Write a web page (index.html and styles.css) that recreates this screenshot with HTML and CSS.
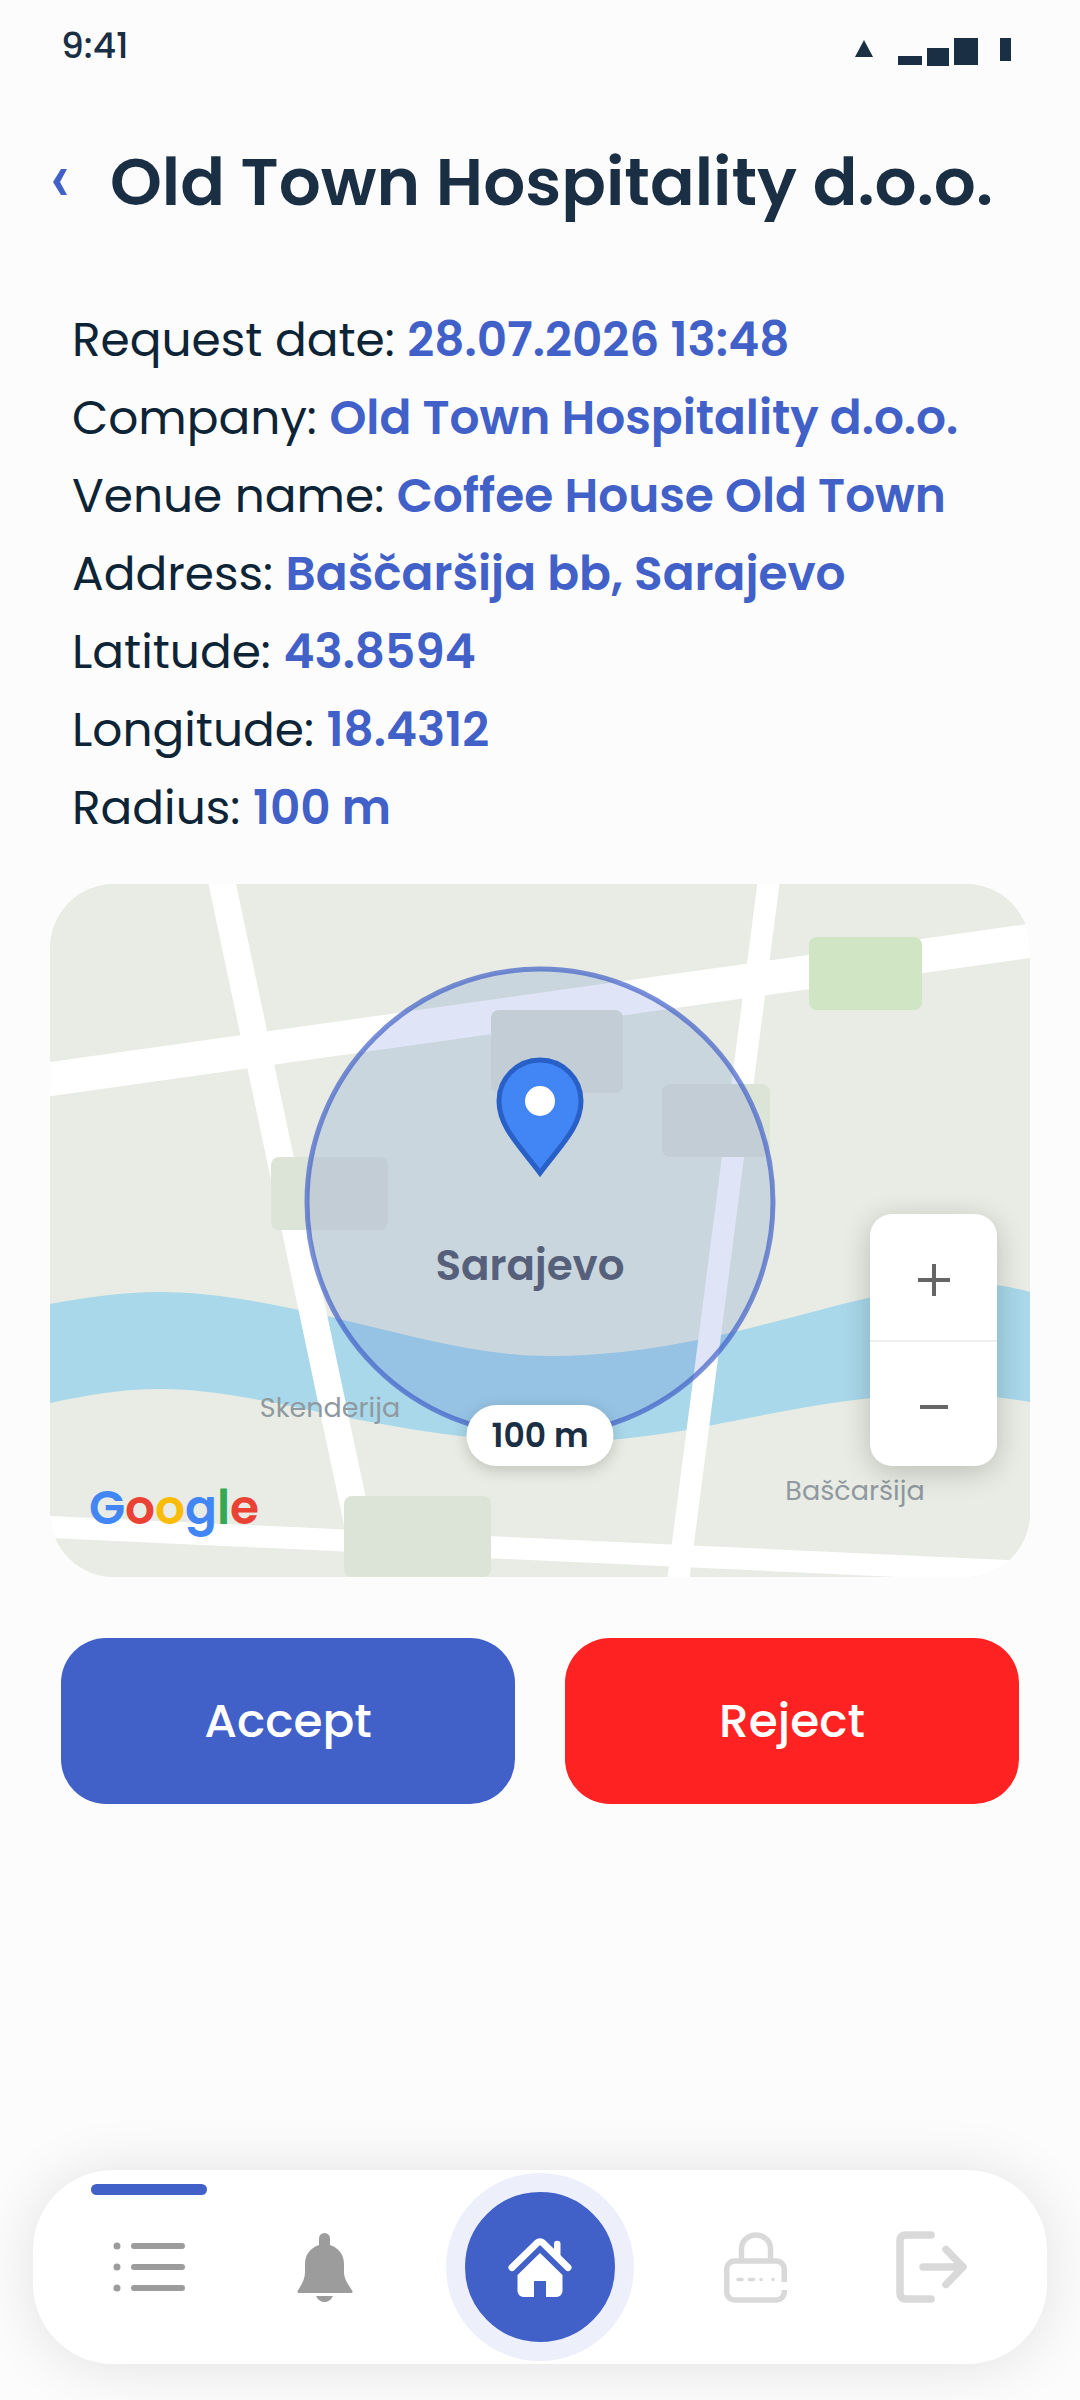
FILE: index.html
```html
<!DOCTYPE html>
<html lang="en">
<head>
  <meta charset="UTF-8" />
  <meta name="viewport" content="width=device-width, initial-scale=1" />
  <title>Old Town Hospitality d.o.o.</title>
  <link rel="stylesheet" href="styles.css">
</head>
<body>
  <div class="screen">
    <div class="status-bar">
      <span>9:41</span>
      <svg class="status-icons" width="158" height="30" viewBox="0 0 158 30" aria-hidden="true">
        <path d="M10 2l9 17H1z" />
        <path d="M44 18h24v9H44zM73 10h22v18H73zM100 0h24v27h-24zM146 0h11v23h-11z" />
      </svg>
    </div>

    <header class="header">
      <button class="back" aria-label="Back">
        <svg width="16" height="28" viewBox="0 0 16 28"><path d="M9 1h6L8 14l7 13H9L1 14z" /></svg>
      </button>
      <h1>Old Town Hospitality d.o.o.</h1>
    </header>

    <main>
      <dl class="details">
        <div><dt>Request date:</dt> <dd>28.07.2026 13:48</dd></div>
        <div><dt>Company:</dt> <dd>Old Town Hospitality d.o.o.</dd></div>
        <div><dt>Venue name:</dt> <dd>Coffee House Old Town</dd></div>
        <div><dt>Address:</dt> <dd>Baščaršija bb, Sarajevo</dd></div>
        <div><dt>Latitude:</dt> <dd>43.8594</dd></div>
        <div><dt>Longitude:</dt> <dd>18.4312</dd></div>
        <div><dt>Radius:</dt> <dd>100 m</dd></div>
      </dl>

      <div class="map">
        <svg class="map-canvas" viewBox="0 0 980 693">
          <rect class="land" width="980" height="693" />
          <circle class="land-near" cx="490" cy="318" r="233" />
          <!-- river -->
          <path class="river" d="M0 420C37 413 73 408 110 408C166 408 221 420 277 432C351 449 426 472 500 472C549 472 598 466 647 456C704 445 761 427 818 414C854 406 889 400 925 400C944 400 962 403 980 408V518C950 513 920 510 890 510C848 510 805 515 763 522C721 529 679 538 637 546C595 553 552 558 510 558C443 558 377 549 310 536C243 524 177 505 110 505C73 505 37 511 0 519Z" />
          <!-- roads -->
          <g class="road">
            <path stroke-width="34" d="M-20 198L1000 54" />
            <path stroke-width="27" d="M168 -20L323 713" />
            <path stroke-width="22" d="M721 -20L626 713" />
            <path stroke-width="22" d="M-20 642L1000 689" />
          </g>
          <!-- blocks -->
          <g class="block">
            <rect x="441" y="126" width="132" height="83" rx="8" />
            <rect x="612" y="200" width="108" height="73" rx="8" />
            <rect x="221" y="273" width="117" height="73" rx="8" />
            <rect x="294" y="612" width="147" height="81" rx="8" />
          </g>
          <rect class="park" x="759" y="53" width="113" height="73" rx="8" />
          <circle class="radius" cx="490" cy="318" r="233" />
          <text class="city" x="480" y="396">Sarajevo</text>
          <text class="area" x="280" y="533">Skenderija</text>
          <text class="area" x="805" y="616">Baščaršija</text>
          <path class="pin" d="M490 289C470 262 449 243 449 217A41 41 0 0 1 531 217C531 243 510 262 490 289Z" />
          <circle class="pin-dot" cx="490" cy="217" r="15" />
          <text class="google" x="39" y="640"><tspan fill="#4285f4">G</tspan><tspan fill="#ea4335">o</tspan><tspan fill="#fbbc05">o</tspan><tspan fill="#4285f4">g</tspan><tspan fill="#34a853">l</tspan><tspan fill="#ea4335">e</tspan></text>
        </svg>
        <span class="badge">100 m</span>
        <div class="zoom">
          <button aria-label="Zoom in"><svg width="32" height="32" viewBox="0 0 32 32"><path d="M0 16h32M16 0v32" /></svg></button>
          <button aria-label="Zoom out"><svg width="32" height="32" viewBox="0 0 32 32"><path d="M2 16h28" /></svg></button>
        </div>
      </div>

      <div class="actions">
        <button class="btn accept">Accept</button>
        <button class="btn reject">Reject</button>
      </div>
    </main>

    <nav class="tabbar">
      <button class="tab active" aria-label="Requests">
        <svg width="72" height="52" viewBox="0 0 72 52" fill="none" stroke="#9c9c9c" stroke-width="6" stroke-linecap="round">
          <path d="M21 5h48M21 26h48M21 47h48" />
          <path stroke-width="7" d="M4 5h0M4 26h0M4 47h0" />
        </svg>
      </button>
      <button class="tab" aria-label="Notifications">
        <svg width="56" height="69" viewBox="0 0 56 69" fill="#9c9c9c">
          <path d="M22 12V5.500a5.500 5.500 0 0 1 11 0V12C42 15 47 22 47 31V39C47 46 51 51 55.500 58Q56 60 54 60H2Q0 60 .5 58C5 51 8 46 8 39V31C8 22 13 15 22 12Z" />
          <path d="M19 63h17c-2 4-5 6-8.500 6S21 67 19 63z" />
        </svg>
      </button>
      <button class="home" aria-label="Home">
        <svg width="64" height="59" viewBox="0 0 64 59" fill="#fff">
          <path d="M4 29.500L29 5Q32 2.500 35 5L60 29.500" fill="none" stroke="#fff" stroke-width="7" stroke-linecap="round" />
          <path d="M46 14V6a3.200 3.200 0 0 1 6.500 0V20z" />
          <path d="M32 15L54.500 37V53a6 6 0 0 1-6 6H38V43H26V59H15.500a6 6 0 0 1-6-6V37z" />
        </svg>
      </button>
      <button class="tab" aria-label="Password">
        <svg width="63" height="71" viewBox="0 0 63 71" fill="none" stroke="#d9d9d9" stroke-width="5.500">
          <path d="M17.500 28V16.500a14.500 13.500 0 0 1 29 0V28" />
          <path d="M60.250 50V37a8 8 0 0 0-8-8H10.750a8 8 0 0 0-8 8V60a8 8 0 0 0 8 8H52.250a8 8 0 0 0 8-8V58" />
          <path stroke-width="3.500" stroke-linecap="round" d="M14 47.500h4M25.500 47.500h4M37 47.500h0M49 47.500h0" />
        </svg>
      </button>
      <button class="tab" aria-label="Log out">
        <svg width="71" height="72" viewBox="0 0 71 72" fill="none" stroke="#d9d9d9" stroke-width="7.500" stroke-linecap="round" stroke-linejoin="round">
          <path d="M35 4H10Q4 4 4 10V62Q4 68 10 68H35" />
          <path d="M27 36H67M50 18.500L67 36L50 53.500" />
        </svg>
      </button>
    </nav>
  </div>
</body>
</html>
```
FILE: styles.css
```css
* { box-sizing: border-box; }
body {
  margin: 0;
  font-family: 'Poppins', 'Inter', sans-serif;
  background: #fcfcfc;
  color: #1a2e44;
}
button {
  font-family: inherit;
  border: none;
  padding: 0;
  background: none;
  cursor: pointer;
}
svg { display: block; }
.screen {
  min-height: 100vh;
  display: flex;
  flex-direction: column;
  padding-bottom: 36px;
}

/* status bar */
.status-bar {
  display: flex;
  justify-content: space-between;
  align-items: flex-end;
  padding: 24px 68px 0 61px;
  font-size: 36px;
  line-height: 44px;
  font-weight: 500;
}
.status-icons { fill: #1a2e44; }

/* header */
.header {
  display: flex;
  align-items: center;
  gap: 42px;
  padding: 66px 50px 0 52px;
}
.back svg { fill: #4161c8; }
h1 {
  margin: 0;
  font-size: 66px;
  line-height: 96px;
  font-weight: 600;
  white-space: nowrap;
}

/* request details */
.details {
  margin: 71px 0 0;
  padding: 0 72px;
  font-size: 47px;
  line-height: 78px;
  color: #0c2436;
  white-space: nowrap;
}
.details dt, .details dd {
  display: inline;
  margin: 0;
}
.details dd {
  font-weight: 600;
  color: #4161c8;
}

/* map */
.map {
  position: relative;
  margin: 37px 50px 0;
  border-radius: 64px;
  overflow: hidden;
}
.map-canvas { width: 100%; }
.land { fill: #e8ece4; }
.land-near { fill: #e6efe2; }
.river { fill: #a8d8ea; }
.road { stroke: #fff; }
.block { fill: #dce4d8; }
.park { fill: #cfe5c3; }
.radius {
  fill: #4161c8;
  fill-opacity: .17;
  stroke: #4161c8;
  stroke-opacity: .7;
  stroke-width: 5;
}
.city, .area { text-anchor: middle; }
.city {
  font-size: 42px;
  font-weight: 600;
  fill: #56607a;
}
.area {
  font-size: 27px;
  fill: #8f999f;
}
.pin {
  fill: #4285f4;
  stroke: #2860c8;
  stroke-width: 5;
}
.pin-dot { fill: #fff; }
.google {
  font-size: 47px;
  font-weight: 600;
}
.badge {
  position: absolute;
  left: 50%;
  bottom: 111px;
  transform: translateX(-50%);
  padding: 0 25px;
  border-radius: 31px;
  background: #fff;
  font-size: 33px;
  line-height: 61px;
  font-weight: 600;
  white-space: nowrap;
  box-shadow: 0 4px 16px rgba(0, 0, 0, .18);
}
.zoom {
  position: absolute;
  right: 33px;
  bottom: 111px;
  width: 127px;
  border-radius: 22px;
  background: #fff;
  box-shadow: 0 6px 30px rgba(0, 0, 0, .2);
}
.zoom button {
  display: flex;
  align-items: center;
  justify-content: center;
  width: 100%;
  height: 126px;
  padding-top: 6px;
}
.zoom button + button { border-top: 2px solid #eee; }
.zoom path {
  stroke: #666;
  stroke-width: 4;
}

/* accept / reject */
.actions {
  display: flex;
  gap: 50px;
  padding: 61px;
}
.btn {
  flex: 1;
  height: 166px;
  border-radius: 45px;
  color: #fff;
  font-size: 47px;
  font-weight: 500;
}
.accept { background: #4161c8; }
.reject { background: #ff2222; }

/* bottom navigation */
.tabbar {
  display: flex;
  justify-content: space-between;
  align-items: center;
  margin: auto 33px 0;
  padding: 0 62px;
  height: 194px;
  border-radius: 80px;
  background: #fff;
  box-shadow: 0 2px 60px rgba(0, 0, 0, .11);
}
.tab {
  position: relative;
  display: flex;
  align-items: center;
  justify-content: center;
  width: 108px;
  height: 100%;
}
.active::before {
  content: '';
  position: absolute;
  top: 14px;
  left: -4px;
  right: -4px;
  height: 11px;
  border-radius: 6px;
  background: #4161c8;
}
.home {
  display: flex;
  align-items: center;
  justify-content: center;
  width: 188px;
  height: 188px;
  border: 19px solid #edf0fb;
  border-radius: 50%;
  background: #4161c8;
}
```
